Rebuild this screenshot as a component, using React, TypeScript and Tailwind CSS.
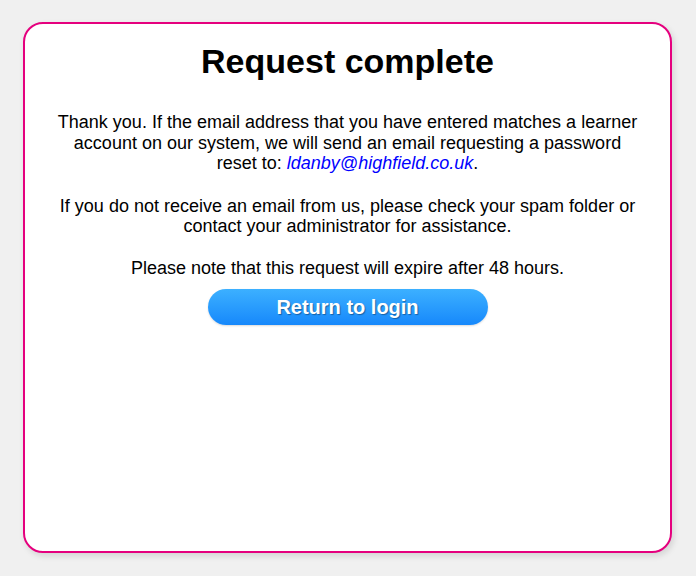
export default function App() {
  return (
    <div className="min-h-[576px] bg-[#f0f0f0] pt-[22px] pl-[23px] font-['Liberation_Sans',Arial,sans-serif]">
      <div className="w-[649px] h-[531px] rounded-[20px] border-2 border-[#e5007e] bg-white shadow-[2px_3px_6px_rgba(0,0,0,0.12)] px-[30px] text-center text-black">
        <h1 className="mt-[18px] text-[34px] font-bold leading-[39px]">Request complete</h1>
        <p className="mt-[31px] text-[18px] leading-[20.5px]">
          Thank you. If the email address that you have entered matches a learner account on our system, we
          will send an email requesting a password reset to:{' '}
          <span className="italic text-[#0000ff]">ldanby@highfield.co.uk</span>.
        </p>
        <p className="mt-[22px] text-[18px] leading-[20.5px]">
          If you do not receive an email from us, please check your spam folder or contact your administrator
          for assistance.
        </p>
        <p className="mt-[21px] text-[18px] leading-[20.5px]">Please note that this request will expire after 48 hours.</p>
        <button className="mt-[11px] h-[36px] w-[280px] rounded-full bg-gradient-to-b from-[#3cb0ff] to-[#1688fb] text-[20px] font-bold text-white [text-shadow:1px_1px_1px_rgba(0,0,0,0.35)] shadow-[0_1px_2px_rgba(0,0,0,0.15)]">
          Return to login
        </button>
      </div>
    </div>
  );
}
